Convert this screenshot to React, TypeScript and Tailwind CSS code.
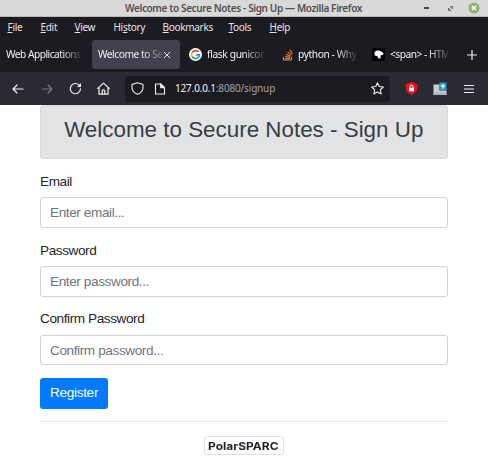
import type { ReactNode } from "react";

const menus = [
  { key: "F", before: "", after: "ile", cls: "w-[33px]" },
  { key: "E", before: "", after: "dit", cls: "w-[34px]" },
  { key: "V", before: "", after: "iew", cls: "w-[39px]" },
  { key: "s", before: "Hi", after: "tory", cls: "w-[49px]" },
  { key: "B", before: "", after: "ookmarks", cls: "w-[66px]" },
  { key: "T", before: "", after: "ools", cls: "w-[41px]" },
  { key: "H", before: "", after: "elp", cls: "w-[30px]" },
];

function TitleBar() {
  return (
    <header className="flex h-[17px] shrink-0 items-center border-b border-[#b9b9b9] bg-[#d9d9d9] pl-[125px] text-[10px] font-semibold text-[#505050]">
      <span className="w-[299px] whitespace-nowrap leading-[14px] tracking-[-0.37px]">
        Welcome to Secure Notes - Sign Up — Mozilla Firefox
      </span>
      <span className="h-[1.5px] w-[5px] bg-[#444]" />
      <svg className="ml-[19px] size-[5px]" viewBox="0 0 6 6" fill="none" stroke="#444" strokeWidth="1.3">
        <path d="M2.4 .9H5.1V3.5M.9 2.5V5.1H3.5" />
      </svg>
      <svg className="ml-[15px] size-[12px]" viewBox="0 0 12 12">
        <circle cx="6" cy="6" r="5.6" fill="#92b372" />
        <path d="M4 4l4 4M8 4L4 8" stroke="#fff" strokeWidth="1.5" />
      </svg>
    </header>
  );
}

function MenuBar() {
  return (
    <nav className="flex h-[20px] shrink-0 items-center pl-[7.5px] text-[10px] text-[#e4e4e8]">
      {menus.map((m) => (
        <span key={m.key} className={`whitespace-nowrap tracking-[-0.3px] ${m.cls}`}>
          {m.before}
          <u className="underline-offset-1">{m.key}</u>
          {m.after}
        </span>
      ))}
    </nav>
  );
}

function Fade({ className, children }: { className: string; children: ReactNode }) {
  return (
    <span
      className={`whitespace-nowrap [mask-image:linear-gradient(to_right,#000_calc(100%-20px),#0002)] ${className}`}
    >
      {children}
    </span>
  );
}

function TabStrip() {
  return (
    <div className="flex h-[35px] shrink-0 items-center text-[10.2px] tracking-[-0.5px] text-[#f0f0f4]">
      <Fade className="ml-[6px] w-[75px]">Web Applications</Fade>
      <div className="ml-[11px] flex h-[29px] w-[88px] items-center rounded-[3px] bg-[#42414d] pl-[6px]">
        <Fade className="w-[65px] tracking-[-0.45px]">Welcome to Se</Fade>
        <svg className="size-[8px]" viewBox="0 0 8 8" stroke="#e8e8ec" strokeWidth="1">
          <path d="M1 1l6 6M7 1L1 7" />
        </svg>
      </div>
      <svg className="ml-[9px] size-[13px]" viewBox="0 0 48 48">
        <circle cx="24" cy="24" r="24" fill="#fff" />
        <g fill="none" strokeWidth="6.5">
          <path d="M35.5 15A15 15 0 0 0 11 17" stroke="#ea4335" />
          <path d="M11 17A15 15 0 0 0 11 31" stroke="#fbbc05" />
          <path d="M11 31A15 15 0 0 0 33.5 35.5" stroke="#34a853" />
          <path d="M33.5 35.5A15 15 0 0 0 38.5 25H25" stroke="#4285f4" />
        </g>
      </svg>
      <Fade className="ml-[5px] w-[57px] tracking-[-0.35px]">flask gunicor</Fade>
      <svg className="ml-[18px] size-[12px]" viewBox="0 0 12 12" fill="none">
        <path d="M1.5 8v3h8V8" stroke="#a9a9ac" />
        <path d="M3 9.4h5M3.2 7.3l5 1M4 5.2l4.6 2M5.6 2.9l3.8 3.2M7.7.9l2.7 4" stroke="#e87922" strokeWidth="1.15" />
      </svg>
      <Fade className="ml-[4px] w-[58px] tracking-[-0.4px]">python - Why</Fade>
      <svg className="ml-[16px] size-[13px]" viewBox="0 0 13 13">
        <path d="M0 0h13v13H0z" fill="#000" />
        <path d="M2.3 4.5L4 2.8l3-.3 2 .7 2.6 2.2-.5 1.3-2.3.6-.3 2.9-2 .3-1.2-2.3-2.500-.7z" fill="#fff" />
      </svg>
      <Fade className="ml-[5px] w-[58px]">&lt;span&gt; - HTM</Fade>
      <svg className="ml-[19px] size-[10px]" viewBox="0 0 10 10" stroke="#f0f0f4" strokeWidth="1.2">
        <path d="M5 0v10M0 5h10" />
      </svg>
    </div>
  );
}

function Toolbar() {
  return (
    <div className="flex h-[33px] shrink-0 items-center bg-[#2b2a33] pl-[12px]">
      <svg className="size-[12px]" viewBox="0 0 12 12" fill="none" stroke="#f0f0f4" strokeWidth="1.2" strokeLinecap="round" strokeLinejoin="round">
        <path d="M11 6H1M5 2L1 6l4 4" />
      </svg>
      <svg className="ml-[17px] size-[12px]" viewBox="0 0 12 12" fill="none" stroke="#77767f" strokeWidth="1.2" strokeLinecap="round" strokeLinejoin="round">
        <path d="M1 6h10M7 2l4 4-4 4" />
      </svg>
      <svg className="ml-[16px] size-[13px]" viewBox="0 0 13 13" fill="none" stroke="#f0f0f4" strokeWidth="1.2" strokeLinecap="round">
        <path d="M11.5 6.8A5.1 5.1 0 1 1 10.2 3.2" />
        <path d="M12 1v4H8z" fill="#f0f0f4" stroke="none" />
      </svg>
      <svg className="ml-[15px] size-[13px]" viewBox="0 0 13 13" fill="none" stroke="#f0f0f4" strokeWidth="1.2" strokeLinejoin="round" strokeLinecap="round">
        <path d="M.7 6.4l5.8-5.3 5.8 5.3M2 5.5v6.7h9V5.5" />
        <path d="M5.2 12V9.1a1.3 1.3 0 0 1 2.6 0V12" />
      </svg>
      <div className="ml-[15px] flex h-[26px] w-[265px] items-center rounded-[3px] bg-[#1c1b22] pl-[6px] text-[10px] text-[#a4a4aa]">
        <svg className="size-[13px]" viewBox="0 0 13 13" fill="none" stroke="#f0f0f4" strokeWidth="1.1" strokeLinejoin="round">
          <path d="M6.5.7L12 2.5v3.2c0 3-2.2 5.2-5.5 6.6C3.2 10.9 1 8.7 1 5.7V2.5z" />
        </svg>
        <svg className="ml-[10px] size-[12px]" viewBox="0 0 12 12" fill="none" stroke="#f0f0f4" strokeWidth="1.1" strokeLinejoin="round">
          <path d="M1.5 1h5.2L10.5 4.6V11h-9z" />
          <path d="M6.7 1v3.6h3.8z" fill="#f0f0f4" />
        </svg>
        <span className="ml-[9px] w-[196px] whitespace-nowrap tracking-[-0.17px]">
          <span className="text-[#f4f4f6]">127.0.0.1</span>:8080/signup
        </span>
        <svg className="size-[13px]" viewBox="0 0 13 13" fill="none" stroke="#f0f0f4" strokeWidth="1.1" strokeLinejoin="round">
          <path d="M6.5.8l1.7 3.7 4.1.5-3 2.8.8 4.1-3.6-2-3.6 2 .8-4.1-3-2.8 4.1-.5z" />
        </svg>
      </div>
      <svg className="ml-[15px] size-[13px]" viewBox="0 0 13 13">
        <path d="M6.5 0L12.3 1.9v4c0 3.2-2.3 5.6-5.8 7.1C3 11.5.7 9.1.7 5.9v-4z" fill="#e3141b" />
        <path d="M4 5.8h5v3.5H4z" fill="#fff" />
        <path d="M5 6V4.6a1.5 1.5 0 0 1 3 0V6" fill="none" stroke="#fff" />
      </svg>
      <svg className="ml-[15px] size-[14px]" viewBox="0 0 14 14">
        <path d="M.5 2.5h6v6h7V13H.5z" fill="#c9cdd1" />
        <path d="M.5 10.5h13V13H.5z" fill="#aeb4ba" />
        <path d="M6.5.5h7V8h-7z" fill="#249bd7" />
        <path d="M10 2v4.5M7.8 4.2h4.4" stroke="#fff" strokeWidth="1.3" />
      </svg>
      <svg className="ml-[17px] size-[10px]" viewBox="0 0 10 10" stroke="#f0f0f4" strokeWidth="1.2">
        <path d="M0 1.5h10M0 5h10M0 8.5h10" />
      </svg>
    </div>
  );
}

function Field({ label, placeholder, type }: { label: string; placeholder: string; type: string }) {
  return (
    <label className="mb-[12.8px] flex flex-col">
      <span className="mb-[6.4px] leading-[19.2px] text-[#212529]">{label}</span>
      <input
        type={type}
        placeholder={placeholder}
        className="h-[30.4px] w-full rounded-[3px] border border-[#ced4da] bg-white px-[9px] tracking-[-0.4px] placeholder:text-[#6c757d]"
      />
    </label>
  );
}

export default function App() {
  return (
    <div className="flex h-[467px] w-[488px] flex-col overflow-hidden bg-white">
      <div className="flex flex-col bg-[#1c1b22] font-['Noto_Sans',sans-serif]">
        <TitleBar />
        <MenuBar />
        <TabStrip />
        <Toolbar />
      </div>
      <main className="flex flex-col pr-[40.5px] pl-[40px] font-['Liberation_Sans',Arial,sans-serif] text-[13.6px] tracking-[-0.42px]">
        <h1 className="flex h-[54px] items-center justify-center whitespace-nowrap rounded-[3px] border border-[#d6d8db] bg-[#e2e3e5] pb-[4px] text-[22.4px] tracking-normal text-[#383d41]">
          Welcome to Secure Notes - Sign Up
        </h1>
        <form className="mt-[12.8px] flex flex-col">
          <Field label="Email" placeholder="Enter email..." type="email" />
          <Field label="Password" placeholder="Enter password..." type="password" />
          <Field label="Confirm Password" placeholder="Confirm password..." type="password" />
          <button type="button" className="h-[30.4px] w-[68px] rounded-[3px] bg-[#007bff] tracking-[-0.3px] text-white">
            Register
          </button>
        </form>
        <hr className="mt-[12.8px] border-[#e7e7e7]" />
        <div className="mt-[14px] flex h-[19px] w-[80px] items-center justify-center self-center rounded-[3px] border border-[#dee2e6] font-['Inter',sans-serif] text-[11px] font-bold tracking-normal text-[#212529]">
          <span className="scale-x-[1.09]">PolarSPARC</span>
        </div>
      </main>
    </div>
  );
}
